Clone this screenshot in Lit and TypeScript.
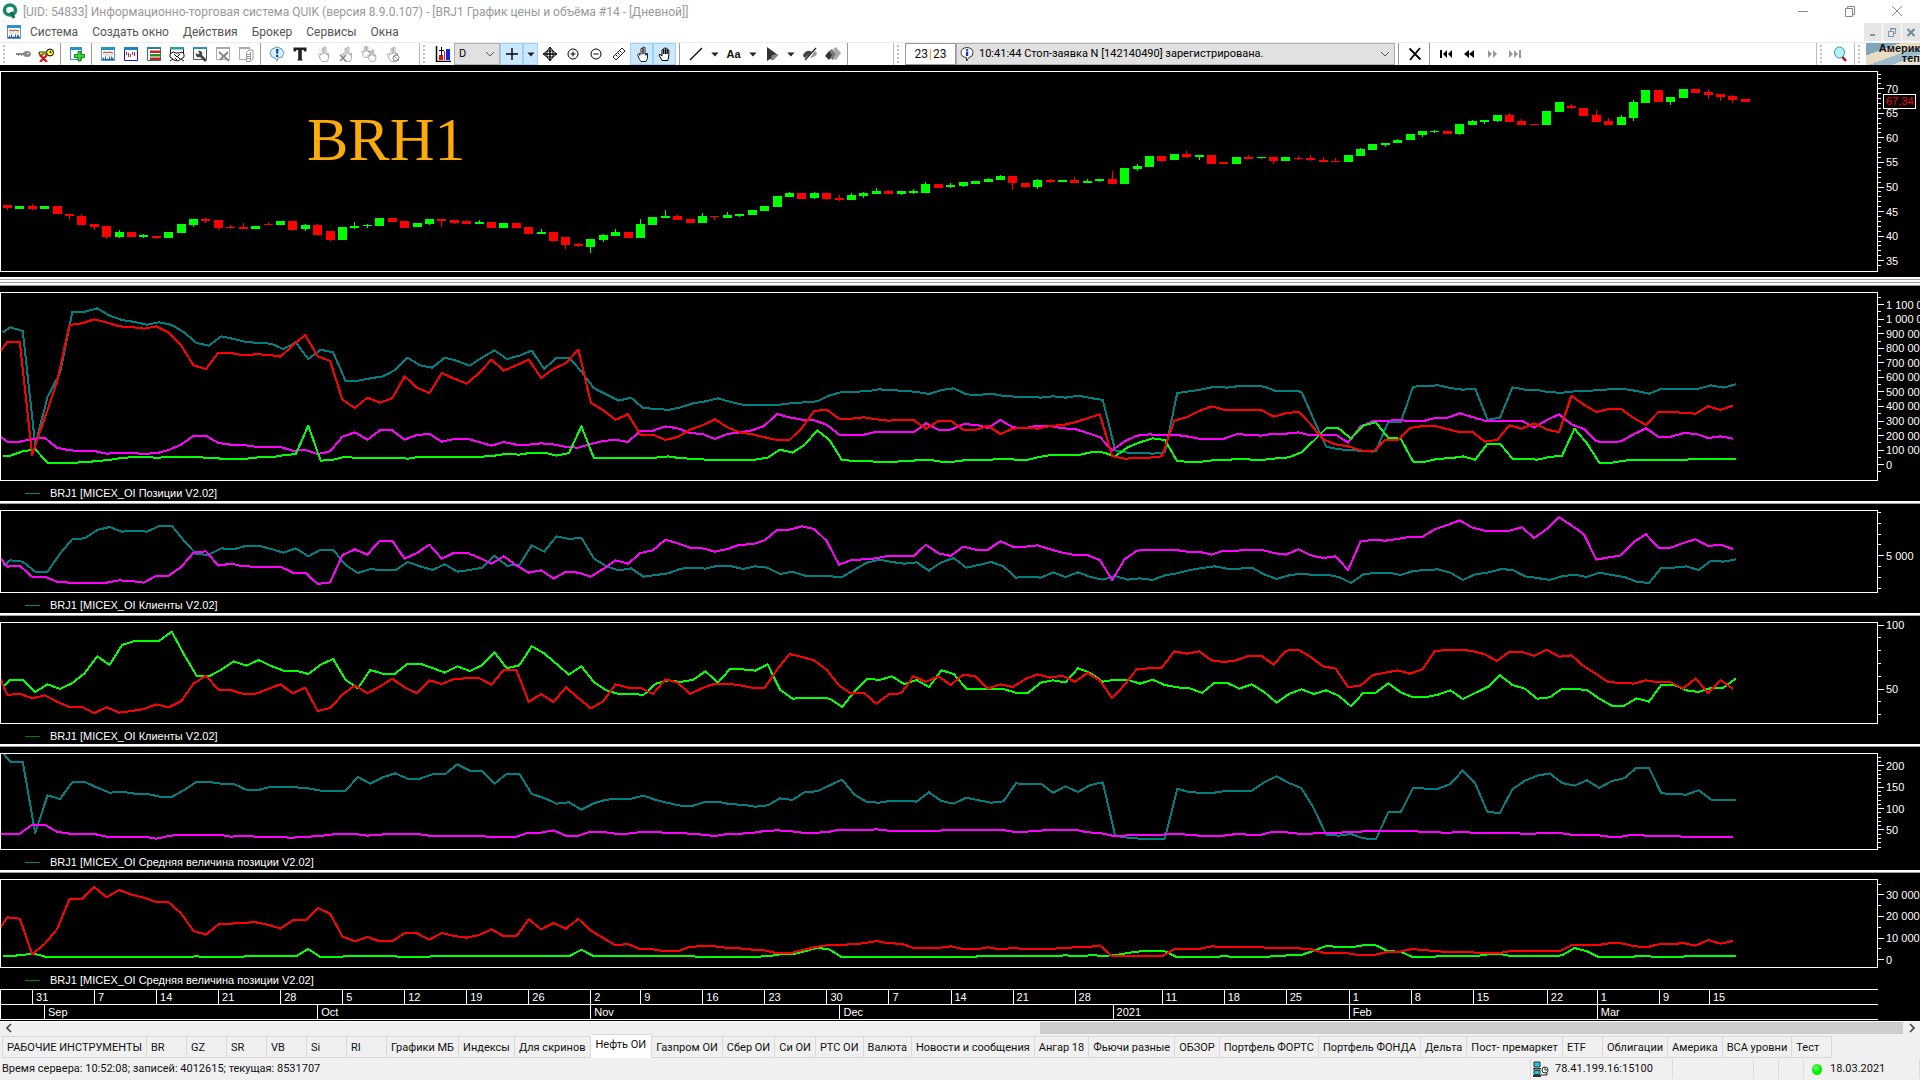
import { LitElement, html, svg, css, nothing } from "lit";
import { customElement, property } from "lit/decorators.js";

/* ---------- chart data ---------- */

const TEAL = "#008080";
const RED = "#ff0000";
const PINK = "#ff00ff";
const LIME = "#00ff00";

const PLOT_WIDTH = 1876;
const BAR_STEP = 12.414;
const FIRST_BAR = 7.35;
const UNITS = 3; // vertical data units per pixel of plot height

interface Series {
  color: string;
  shift: number;
  start: number;
  values: number[];
}
interface Tick {
  at: number;
  label?: string;
}
interface Pane {
  height: number;
  top: number;
  series: Series[];
  candles?: string[];
  ticks: Tick[];
  legend?: string;
  legendColor?: string;
  price?: { at: number; label: string };
  caption?: string;
}

/** "5 7*3 9" -> [5, 7, 7, 7, 9] */
const expand = (text: string): number[] =>
  text
    .trim()
    .split(/\s+/)
    .flatMap((t) => {
      const [v, n] = t.split("*");
      return Array(n ? Number(n) : 1).fill(Number(v));
    });

const line = (color: string, start: number, text: string): Series => ({
  color,
  shift: color === TEAL || color === LIME ? 3 : 0,
  start,
  values: expand(text),
});

const scale = (first: number, step: number, count: number, every: number, from: number, labels: string[]): Tick[] =>
  Array.from({ length: count }, (_, i) => {
    const major = i >= from && (i - from) % every === 0;
    return { at: first + step * i, label: major ? labels[(i - from) / every] : undefined };
  });

const candles = `
r,75,75,83,90 g,78,78,87,87 r,72,78,87,90 g,78,78,87,87 r,78,78,101,101 r,102,102,108,120 r,102,108,135,135 r,132,132,141,150 r,138,138,171,177 g,150,156,171,174
r,156,156,171,171 g,162,165,171,174 r,168,168,174,177 g,156,156,174,174 g,132,132,159,159 g,117,117,135,140 r,114,117,123,129 r,120,120,144,150 r,135,140,144,147 r,129,141,147,147
g,138,138,147,147 r,126,131,135,135 g,123,123,135,135 r,123,123,150,153 g,132,135,147,153 r,132,135,165,165 r,153,153,180,183 g,141,141,180,180 g,126,138,144,147 g,131,134,138,143
g,114,114,138,138 r,114,114,126,126 r,123,123,144,144 g,129,129,141,141 g,117,117,132,135 r,117,117,123,140 r,120,120,129,132 r,120,123,132,132 g,120,126,132,132 r,126,126,144,144
g,129,129,144,144 r,129,129,144,144 r,141,141,162,162 g,147,156,162,162 r,156,156,183,186 r,171,171,195,207 r,189,192,198,201 g,177,177,201,219 g,162,165,180,186 g,147,156,168,168
r,156,156,174,174 g,117,132,174,174 g,111,111,135,135 g,90,108,114,114 r,105,108,120,120 r,117,117,129,129 g,99,108,129,129 r,108,108,111,120 g,96,105,114,114 g,102,102,108,111
g,90,90,105,105 g,78,78,93,93 g,48,48,81,81 g,36,39,51,51 r,39,39,57,57 g,36,39,54,57 r,39,39,57,60 r,45,54,60,63 g,39,45,60,60 g,36,39,48,54
g,24,33,42,42 r,30,33,42,42 g,33,33,42,45 g,27,33,39,42 g,6,12,39,39 r,12,12,24,24 g,9,15,21,24 g,6,6,18,21 g,3,3,12,12 g,-6,-3,6,6
g,-15,-12,0,0 r,-12,-12,9,30 r,9,9,21,24 g,-3,0,21,27 r,-3,0,6,9 g,0,0,6,6 r,-9,0,9,9 g,-3,3,9,9 g,-3,-3,3,6 r,-27,-3,12,12
g,-36,-36,12,12 g,-48,-42,-33,-27 g,-72,-72,-39,-39 r,-72,-72,-57,-54 g,-78,-78,-60,-60 r,-87,-78,-69,-66 g,-75,-75,-69,-60 r,-75,-75,-48,-48 r,-54,-54,-48,-48 g,-69,-69,-48,-48
r,-75,-69,-63,-63 g,-69,-69,-66,-63 r,-69,-69,-57,-48 g,-69,-69,-57,-57 r,-72,-66,-63,-60 r,-75,-66,-60,-57 r,-69,-60,-54,-54 r,-66,-57,-54,-54 g,-75,-75,-54,-54 g,-96,-93,-72,-72
g,-108,-108,-90,-90 g,-111,-111,-105,-99 g,-123,-120,-111,-111 g,-138,-138,-120,-120 g,-147,-147,-135,-129 g,-150,-147,-144,-141 r,-147,-147,-138,-138 g,-168,-168,-138,-135 g,-180,-177,-165,-165 g,-180,-180,-174,-168
g,-195,-195,-177,-174 r,-201,-195,-174,-174 r,-183,-177,-165,-165 r,-168,-168,-165,-165 g,-207,-207,-165,-165 g,-234,-234,-204,-204 r,-228,-222,-216,-213 r,-216,-216,-192,-192 r,-210,-195,-174,-174 r,-186,-177,-165,-165
g,-195,-189,-165,-165 g,-240,-234,-186,-177 g,-270,-270,-231,-231 r,-270,-270,-234,-234 g,-249,-249,-234,-225 g,-273,-273,-246,-246 r,-273,-273,-261,-261 r,-273,-264,-255,-243 r,-258,-258,-249,-237 r,-255,-252,-240,-231
r,-243,-243,-234,-234`
  .trim()
  .split(/\s+/);

const panes: Pane[] = [
  {
    height: 201,
    top: -324,
    series: [],
    candles,
    ticks: scale(3, 4.914, 40, 5, 3, ["70", "65", "60", "55", "50", "45", "40", "35"]),
    price: { at: 23, label: "67,34" },
    caption: "BRH1",
  },
  {
    height: 189,
    top: 340,
    legend: "BRJ1 [MICEX_OI Позиции V2.02]",
    legendColor: "#008080",
    ticks: scale(5.4, 7.273, 25, 2, 1, [
      "1 100 000", "1 000 000", "900 000", "800 000", "700 000", "600 000",
      "500 000", "400 000", "300 000", "200 000", "100 000", "0",
    ]),
    series: [
      line(TEAL, 458, `443 454 795 652 580 396 396 386 408 421
        427 435 428 436 458 490 498 470 478 487
        490 492 508 488 538 510 518 603 603 596
        590 571 534 557 564 534 544 558 534 512
        538 528 513 568 534 534 575 625 644 663
        654 686 687 691 683 671 665 656 667 675
        675 675 675 670 668 665 647 637 636 635
        629 632 633 637 643 631 626 644 646 642
        649 651 651 654 650 654 648 655 661 812
        819 819 822 818 640 635 629 621 624 619
        618 621 635 633 636 720 801 809 811 814
        814 727 728 621 619 617 625 630 627 720
        714 623 630 631 638 639 635 633 632 628
        628 634 642 627 627 627 627 617 624 614`),
      line(PINK, 770, `786 786 778 774 804 812 814 814 822 819
        821 822 821 811 795 768 768 790 795 796
        801 801 802 813 811 823 815 771 758 780
        752 752 780 766 763 786 778 777 787 798
        787 795 795 791 794 802 804 793 784 780
        787 753 753 740 746 760 763 778 763 758
        752 738 703 713 720 722 735 765 765 765
        756 756 758 758 731 750 750 734 735 745
        721 743 745 738 739 746 748 760 772 812
        785 768 764 767 765 770 777 777 777 764
        765 768 762 762 758 767 765 765 789 740
        725 723 722 723 725 715 714 701 712 723
        723 723 723 744 721 704 734 748 785 788
        785 764 746 771 771 761 762 775 770 777`),
      line(LIME, 828, `828 815 809 849 849 849 848 844 841 834
        833 833 834 831 831 833 834 837 837 837
        833 833 827 823 738 843 840 831 836 836
        836 834 837 831 833 833 831 831 831 828
        822 825 819 819 828 820 740 834 834 834
        834 834 834 830 836 837 840 840 840 840
        840 834 810 819 795 752 782 842 843 845
        846 846 845 842 840 846 846 841 840 840
        837 840 840 831 825 827 827 818 818 830
        803 788 776 781 845 846 846 841 841 837
        840 840 836 833 818 783 746 746 777 737
        728 775 777 846 846 837 836 830 840 792
        792 837 837 840 832 828 747 791 849 849
        843 840 840 840 840 840 837 837 837 837`),
      line(RED, 517, `486 486 826 716 607 436 431 419 428 440
        442 447 440 459 497 557 568 519 520 527
        524 525 531 497 466 530 544 661 685 654
        669 656 590 624 640 580 597 612 580 540
        573 557 540 595 568 550 510 669 692 720
        704 765 765 781 772 750 737 719 743 758
        764 773 781 781 745 694 690 717 717 713
        719 723 720 721 747 724 723 750 751 738
        763 747 744 747 739 736 728 716 704 829
        837 835 834 830 723 713 694 680 690 690
        690 690 711 701 696 734 779 794 800 812
        816 780 782 745 739 739 748 758 756 786
        781 737 747 731 749 758 648 675 697 688
        688 715 736 697 696 700 702 680 691 678`),
    ],
  },
  {
    height: 83,
    top: 94,
    legend: "BRJ1 [MICEX_OI Клиенты V2.02]",
    legendColor: "#008080",
    ticks: scale(2.3, 10.87, 8, 8, 4, ["5 000"]),
    series: [
      line(TEAL, 258, `242 246 276 276 222 178 176 151 142 156
        153 156 139 138 184 224 225 206 209 198
        198 208 219 206 230 210 210 256 280 268
        272 272 247 260 271 254 276 271 264 228
        258 256 197 216 170 178 174 236 260 272
        266 291 286 281 267 264 267 258 259 268
        260 264 283 276 288 289 290 292 270 249
        240 247 252 248 273 248 235 264 256 247
        260 294 291 294 278 292 278 292 300 289
        300 296 301 287 281 271 265 260 267 267
        264 284 298 287 282 286 285 292 310 284
        279 279 286 274 271 269 279 301 284 279
        269 270 290 295 301 290 285 292 279 286
        292 306 310 264 264 260 271 243 246 239`),
      line(PINK, 234, `261 258 291 291 306 309 309 309 309 302
        304 309 288 288 262 219 215 258 252 260
        261 261 261 279 279 313 308 226 209 225
        183 183 237 220 195 237 219 219 234 252
        230 257 279 272 297 276 279 291 268 242
        252 220 212 180 191 204 206 216 208 195
        194 182 151 150 140 148 184 255 241 239
        236 228 230 230 195 221 229 201 210 210
        185 201 201 197 209 219 226 226 241 301
        239 213 210 210 210 216 216 225 213 213
        211 210 220 225 209 227 235 230 271 186
        180 183 178 171 171 149 136 122 144 153
        153 153 143 175 148 113 137 164 240 233
        227 187 164 204 204 190 179 199 195 208`),
    ],
  },
  {
    height: 102,
    top: 430,
    legend: "BRJ1 [MICEX_OI Клиенты V2.02]",
    legendColor: "#008000",
    ticks: scale(3, 12.8, 8, 5, 0, ["100", "50"]),
    series: [
      line(LIME, 622, `600 600 637 614 628 610 580 530 556 496
        484 483 483 456 525 588 590 570 545 558
        541 559 573 573 583 555 538 600 626 571
        582 582 552 552 565 579 560 574 557 518
        566 557 500 521 553 585 560 607 632 643
        642 646 612 602 607 600 575 609 567 569
        573 554 630 657 655 654 657 682 636 597
        601 590 613 601 622 572 583 627 627 627
        628 639 639 609 602 608 566 580 606 600
        600 612 600 616 623 626 640 609 609 627
        614 637 669 643 629 643 632 648 680 639
        639 611 638 653 653 645 632 658 640 622
        587 616 627 657 653 627 628 631 657 678
        678 656 666 615 615 632 637 625 624 596`),
      line(RED, 595, `646 642 656 647 666 682 682 700 683 699
        694 688 674 683 665 612 588 630 631 643
        642 628 614 641 624 694 685 645 617 641
        621 597 623 641 602 613 598 596 595 615
        570 570 667 643 667 623 655 686 665 614
        624 624 643 599 609 643 625 612 612 617
        624 625 570 523 532 542 570 618 642 639
        672 644 641 590 607 590 616 585 590 627
        614 622 598 584 594 588 606 580 602 656
        615 568 566 564 515 522 515 542 547 542
        528 528 555 513 510 532 560 567 622 618
        586 579 572 582 569 513 512 510 514 524
        544 516 516 529 510 531 527 560 583 608
        609 612 602 608 608 627 596 640 601 628`),
    ],
  },
  {
    height: 97,
    top: 73,
    legend: "BRJ1 [MICEX_OI Средняя величина позиции V2.02]",
    legendColor: "#008080",
    ticks: scale(4.2, 4.28, 22, 5, 2, ["200", "150", "100", "50"]),
    series: [
      line(TEAL, 70, `96 96 310 197 208 157 157 174 189 186
        192 192 201 202 181 157 157 162 163 180
        181 171 171 173 176 183 183 183 142 162
        143 131 147 147 134 134 104 123 124 162
        132 132 193 205 222 218 240 221 210 208
        207 198 211 220 228 228 216 216 224 225
        231 227 206 211 187 185 167 150 195 217
        219 213 213 216 188 214 222 204 212 219
        215 161 164 162 189 170 187 166 158 318
        324 327 327 327 177 188 189 189 183 183
        183 158 140 160 175 236 315 318 313 326
        329 248 248 174 177 177 163 122 161 248
        249 179 153 138 131 160 168 152 175 154
        146 114 114 191 193 195 182 210 210 210`),
      line(PINK, 312, `312 312 285 285 306 312 312 313 321 321
        321 321 327 319 315 315 315 315 321 318
        321 321 323 324 321 320 315 312 313 318
        315 312 312 313 318 318 318 318 320 321
        321 321 309 309 302 318 318 306 307 312
        312 307 307 309 310 312 315 319 313 312
        310 304 302 304 309 309 308 300 301 302
        299 303 303 303 303 303 301 300 300 300
        300 306 306 304 300 300 300 308 310 318
        318 315 315 315 312 315 318 318 318 313
        315 315 306 308 312 312 309 309 308 306
        303 303 303 303 307 307 310 306 309 309
        309 309 312 312 309 310 315 315 316 321
        321 315 318 318 318 321 321 321 321 321`),
    ],
  },
  {
    height: 89,
    top: 452,
    legend: "BRJ1 [MICEX_OI Средняя величина позиции V2.02]",
    legendColor: "#008000",
    ticks: scale(5, 10.83, 8, 2, 1, ["30 000", "20 000", "10 000", "0"]),
    series: [
      line(LIME, 681, `681 676 674 684*12 681 684*3 681
        681*4 659 684*2 681*5 684*2 681*12
        661 681*9 684*4 682 681 675 675 666 655 661 684*3
        684*8 681*6
        681 678 681 678 679 678
        671 666 666 666 684 684 684 682 681 684
        684 683 680 678 677 664 650 653 654 648
        648 666 667 684 684 681 681 681 681 675
        674 681 681 681 681 678 656 666 684 684
        684 681 681 684 684 681*5`),
      line(RED, 597, `564 568 675 644 600 510 510 473 504 482
        496 505 518 519 552 605 616 585 583 580
        579 586 598 573 573 536 553 622 636 623
        636 636 611 612 631 611 620 625 617 600
        621 621 570 600 581 598 569 604 626 648
        644 660 660 666 666 652 651 651 656 657
        661 663 672 672 663 654 648 648 644 642
        635 642 643 656 657 656 651 659 660 654
        660 656 659 660 659 656 654 654 648 681
        681 681 681 681 660 660 659 651 653 653
        653 654 656 657 657 660 670 672 672 678
        678 669 669 660 661 666 667 668 669 672
        672 666 666 666 666 666 648 648 648 642
        642 650 654 645 645 641 649 632 643 635`),
    ],
  },
];

const weeks: [number, string][] = [
  [2, "31"], [7, "7"], [12, "14"], [17, "21"], [22, "28"], [27, "5"], [32, "12"], [37, "19"], [42, "26"],
  [47, "2"], [51, "9"], [56, "16"], [61, "23"], [66, "30"], [71, "7"], [76, "14"], [81, "21"], [86, "28"],
  [93, "11"], [98, "18"], [103, "25"], [108, "1"], [113, "8"], [118, "15"], [124, "22"], [128, "1"],
  [133, "9"], [137, "15"],
];
const months: [number, string][] = [
  [3, "Sep"], [25, "Oct"], [47, "Nov"], [67, "Dec"], [89, "2021"], [108, "Feb"], [128, "Mar"],
];

/* ---------- one chart pane ---------- */

@customElement("chart-pane")
export class ChartPane extends LitElement {
  @property({ attribute: false }) pane!: Pane;

  static styles = css`
    :host {
      display: flex;
      flex-direction: column;
      min-height: 0;
      padding-top: 6px;
      box-sizing: border-box;
      background: #000;
      color: #fff;
      font: 11px/14px "Liberation Sans", Arial, sans-serif;
    }
    .row {
      flex: 1;
      min-height: 0;
      display: grid;
      grid-template-columns: 1fr 42px;
    }
    .box {
      position: relative;
      min-width: 0;
      min-height: 0;
      border: 1px solid #fff;
    }
    .plot {
      display: block;
      width: 100%;
      height: 100%;
      position: absolute;
      inset: 0;
    }
    .axis {
      display: block;
      width: 42px;
      height: 100%;
      min-height: 0;
      overflow: visible;
    }
    .tick {
      stroke: #fff;
      shape-rendering: crispEdges;
    }
    .num {
      fill: #fff;
    }
    .tag {
      fill: #000;
      stroke: #fff;
      shape-rendering: crispEdges;
    }
    .tagnum {
      fill: #f00;
    }
    .caption {
      position: absolute;
      left: 306px;
      top: 32px;
      font: 62px/70px "Liberation Serif", "Times New Roman", serif;
      color: #fbac0a;
    }
    .legend {
      height: 20px;
      display: flex;
      align-items: center;
      gap: 10px;
      padding-left: 25px;
      padding-top: 4px;
      box-sizing: border-box;
    }
    .swatch {
      width: 15px;
      height: 1px;
    }
    .foot {
      height: 5px;
    }
  `;

  private drawSeries(s: Series) {
    const pts = s.values.map((v, i) => `${FIRST_BAR + s.shift + BAR_STEP * i},${v}`);
    return svg`<polyline points="${s.shift ? 3 : 0},${s.start} ${pts.join(" ")}" fill="none" stroke=${s.color}
      stroke-width="2" stroke-linejoin="round" vector-effect="non-scaling-stroke" shape-rendering="crispEdges"></polyline>`;
  }

  private drawCandle(text: string, i: number) {
    const [kind, ...n] = text.split(",");
    const [high, top, bottom, low] = n.map(Number);
    const x = Math.round(FIRST_BAR + BAR_STEP * i - 0.5);
    const fill = kind === "g" ? LIME : RED;
    return svg`<rect x=${x} y=${high} width="1" height=${low - high} fill=${fill}></rect>
      <rect x=${x - 4} y=${top} width="9" height=${Math.max(bottom - top, 3)} fill=${fill}></rect>`;
  }

  render() {
    const p = this.pane;
    const pct = (v: number) => `${(v / p.height) * 100}%`;
    return html`
      <div class="row">
        <div class="box">
          <svg
            class="plot"
            viewBox="1 ${p.top} ${PLOT_WIDTH} ${(p.height - 2) * UNITS}"
            preserveAspectRatio="none"
            shape-rendering="crispEdges"
          >
            ${p.candles?.map((c, i) => this.drawCandle(c, i))} ${p.series.map((s) => this.drawSeries(s))}
          </svg>
          ${p.caption ? html`<div class="caption">${p.caption}</div>` : nothing}
        </div>
        <svg class="axis">
          ${p.ticks.map(
            (t) => svg`<line class="tick" x1="0" x2=${t.label ? 6 : 3} y1=${pct(t.at)} y2=${pct(t.at)}></line>
              ${t.label ? svg`<text class="num" x="8" y=${pct(t.at)} dy="4">${t.label}</text>` : nothing}`,
          )}
          ${p.price
            ? svg`<svg y=${pct(p.price.at)} overflow="visible">
                <rect class="tag" x="5" y="0" width="32" height="14"></rect>
                <text class="tagnum" x="8" y="11">${p.price.label}</text></svg>`
            : nothing}
        </svg>
      </div>
      ${p.legend
        ? html`<div class="legend">
            <span class="swatch" style="background:${p.legendColor}"></span><span>${p.legend}</span>
          </div>`
        : html`<div class="foot"></div>`}
    `;
  }
}

/* ---------- icons ---------- */

const hand = (c: string) => svg`<path d="M5.500 9.500V7.500l-1 0-1 1 2 5 1.500 2h5l1.500-3V7.500h-1.500v2M7 9V2.500q1-1 2 0V8M9 8V1.500q1-1 2 0V8M11 8q1.500-1 1.500 1" fill="#fff" stroke=${c}/>`;
const sheet = (c: string) => svg`<path d="M1.500 1.500h13v13h-13z" fill="#fff" stroke="#5a9ab8"/><path d="M1 1h14v3H1z" fill=${c}/>`;

const icons = {
  keyGrey: svg`<path d="M1 7h8v2H7v1H6V9H4v1H3V9H1z" fill="#8a8a8a"/><ellipse cx="12" cy="8" rx="4" ry="3" fill="#8a8a8a"/><path d="M12 7h2v1h-2z" fill="#fff"/>`,
  keyOff: svg`<path d="M1 6h8v2H4v2H2V8H1z" fill="#ff0" stroke="#000" stroke-width=".8"/><circle cx="12" cy="6.500" r="3.500" fill="#ff0" stroke="#000"/><circle cx="12.500" cy="6" r="1" fill="#000"/><path d="M2 9l7 7M9 9l-7 7" stroke="#d8121c" stroke-width="2.200"/>`,
  add: svg`<path d="M1.500 1.500h11v12h-11z" fill="#fff" stroke="#3a92b0"/><path d="M1 1h12v3H1z" fill="#2793c8"/><path d="M9 5.500h3v3h3.500v3H12V15H9v-3.500H5.500v-3H9z" fill="#3fd33f" stroke="#11861b"/>`,
  chart: svg`${sheet("#2793c8")}<path d="M3 7l2-1 2 1 2-1 4 1" fill="none" stroke="#c22"/><path d="M3.500 13.500v-2M5.500 13.500v-3M7.500 13.500v-1M9.500 13.500v-3M11.500 13.500v-3M12.500 13.500v-2M2 13.500h12" stroke="#2457d0"/><path d="M3 9h10" stroke="#ccc"/>`,
  chartBlue: svg`<path d="M1.500 1.500h13v13h-13z" fill="#fff" stroke="#1010e0"/><path d="M1 1h14v3H1z" fill="#1f86c4"/><path d="M3.500 6v3M5.500 7v4M9.500 6v3M11.500 6v4" stroke="#c22"/><path d="M7.500 8v3" stroke="#2457d0"/>`,
  list: svg`<path d="M1.500 1.500h13v13h-13z" fill="#fff" stroke="#2a7090"/><path d="M1 1h14v2H1z" fill="#2a7fa8"/><path d="M4 4.500h11v2.500H4z" fill="#c8201c"/><path d="M4 8h11v2.500H4z" fill="#1d9427"/><path d="M4 11.500h11v2.500H4z" fill="#c8201c"/>`,
  deal: svg`<path d="M1.500 12V1.500h13V9" fill="#fff" stroke="#222"/><path d="M1 1h14v2.500H1z" fill="#2a9fa8"/><path d="M1 8l3-2 3 1h3l3-1 2 2v3l-3 2-3 2-4-1-4-3z" fill="#fff" stroke="#111"/><path d="M5 8l3 3 3-3M6 12l2 2M9 11l2 2M1 15l3-2M12 13l3 2" stroke="#111" fill="none"/>`,
  wrench: svg`<path d="M1.500 1.500h13v12h-13z" fill="#fff" stroke="#555"/><path d="M1 1h14v2H1z" fill="#2a8fc8"/><path d="M6 5a3 3 0 0 1 4 4l5 5-2 2-5-5a3 3 0 0 1-4-4l2 1.500L7.500 7z" fill="#444"/>`,
  wrenchOff: svg`<path d="M1.500 1.500h13v12h-13z" fill="#fff" stroke="#aaa"/><path d="M1 1h14v2H1z" fill="#aaa"/><path d="M4 6l10 9M13 6l-8 8" stroke="#888" stroke-width="2"/>`,
  copyOff: svg`<path d="M1.500 1.500h10v12h-10z" fill="#fff" stroke="#aaa"/><path d="M1 1h11v2H1z" fill="#aaa"/><path d="M8.500 6.500l2.500-2.500h4v9l-3 2.500H8.500z" fill="#fff" stroke="#999"/><path d="M9 8.500h3M9 10.500h3M9 12.500h3M12.500 6v8" stroke="#999"/>`,
  alert: svg`<path d="M8 1l5 2 2 4-2 4-4 1-1 3-2-3-3-1-2-4 2-4z" fill="#d8efff" stroke="#5a9ab8"/><path d="M7 3h2.500L9 8H7.500z" fill="#0a3cae"/><path d="M7 9h2.200v2H7z" fill="#0a3cae"/>`,
  text: svg`<path d="M1.500 1.500h13v4h-2l-1-1.500H9.800V13l1.200 1.500H5L6.200 13V4H4.500l-1 1.500h-2z" fill="#222"/>`,
  handOff: hand("#aaa"),
  handX: svg`${hand("#aaa")}<path d="M2 9l6 6M8 9l-6 6" stroke="#888" stroke-width="1.600"/>`,
  hands: svg`<g transform="translate(-2 -1) scale(.8)">${hand("#999")}</g><g transform="translate(4 3) scale(.8)">${hand("#999")}</g>`,
  handStop: svg`${hand("#aaa")}<circle cx="12" cy="12" r="3" fill="#fff" stroke="#888"/><path d="M10 10l4 4" stroke="#888"/>`,
  priceChart: svg`<path d="M1.500 0v15.500H16" stroke="#000" fill="none" stroke-width="1.500"/><path d="M4 9h4v5H4z" fill="#e01010"/><path d="M11 3h4v11h-4z" fill="#1020f0"/><path d="M6.500 1v9M4 4.500h5" stroke="#000"/><path d="M9.500 5v9" stroke="#f01010"/>`,
  cross: svg`<path d="M8 2v12M2 8h12" stroke="#000" stroke-width="1.400"/>`,
  move: svg`<path d="M8 2v12M2 8h12" stroke="#000" stroke-width="1.400"/><path d="M5 5L8 1l3 4zM5 11l3 4 3-4zM5 5L1 8l4 3zM11 5l4 3-4 3z" fill="none" stroke="#000"/>`,
  zoomIn: svg`<circle cx="8" cy="8" r="5" fill="none" stroke="#000"/><path d="M8 5.500v5M5.500 8h5" stroke="#000"/>`,
  zoomOut: svg`<circle cx="8" cy="8" r="5" fill="none" stroke="#000"/><path d="M5.500 8h5" stroke="#000"/>`,
  ruler: svg`<path d="M2 11L11 2l3 3-9 9z" fill="#fff" stroke="#222"/><path d="M5 9l1.500 1.500M7 7l1.500 1.500M9 5l1.500 1.500" stroke="#222"/>`,
  hand: hand("#222"),
  palm: svg`<path d="M5 14.500L2 9q.5-1.500 2 0l1 1V4q.8-1 1.700 0v4V2.500q.8-1 1.700 0V8 2.500q.8-1 1.700 0V8 4q.8-1 1.700 0v6q0 2-1 4.500z" fill="#fff" stroke="#000"/>`,
  slash: svg`<path d="M2 14L14 2" stroke="#000" stroke-width="1.200"/>`,
  cursor: svg`<path d="M3 1v14l3-2 3 1 5-5z" fill="#333"/><path d="M8 9l6-1-4 6-3-1z" fill="#888"/>`,
  hide: svg`<path d="M1 9q3-5 7-4l2 1-7 6q-2-1-2-3z" fill="#444"/><path d="M8 12q5-1 7-4 0-2-2-3z" fill="#999"/><path d="M3 14L14 2" stroke="#222" stroke-width="1.300"/>`,
  clear: svg`<path d="M0 10l4-5 4 4-4 5z" fill="#333"/><path d="M4 5l3-2 5 6-4 5-3-2 2-3z" fill="#777"/><path d="M8 3l3-2 5 6-5 7-3-2 3-4z" fill="#aaa"/>`,
  info: svg`<path d="M8 1.500q6 .5 6 5t-4 5L7.500 15v-3.500Q2 11 2 6.500t6-5z" fill="#fff" stroke="#333"/><path d="M7 3h2.200v1.800H7zM7 5.500h2.200V10H7z" fill="#1030e0"/>`,
  cancel: svg`<path d="M2.500 2.500l11 11M13 2L3 14" stroke="#000" stroke-width="1.800"/>`,
  first: svg`<path d="M2 4h2v8H2zM9 4v8L5 8zM14 4v8l-4-4z" fill="#000"/>`,
  back: svg`<path d="M8 4v8L3 8zM13 4v8L8 8z" fill="#000"/>`,
  next: svg`<path d="M4 4v8l4-4zM9 4v8l4-4z" fill="#999"/>`,
  last: svg`<path d="M2 4v8l4-4zM7 4v8l4-4zM12 4h2v8h-2z" fill="#999"/>`,
  find: svg`<ellipse cx="7.500" cy="6.500" rx="5" ry="5.500" fill="#b8f0fa" stroke="#2a8fb0"/><path d="M10.500 11l3.500 4" stroke="#c01010" stroke-width="2.600"/>`,
  link: svg`<path d="M1 1h6v5H1z" fill="#1cc8d8" stroke="#333"/><path d="M0 7h8v1.500H0z" fill="#333"/><path d="M1 9.500h6v4H1z" fill="#1cc8d8" stroke="#333"/><path d="M0 14h8v2H0z" fill="#333"/><circle cx="12" cy="9" r="3" fill="#fff" stroke="#222"/><path d="M12 7v2h2M8 14h6v-2" fill="none" stroke="#222"/>`,
  down: svg`<path d="M4 6h9l-4.500 5z" fill="#222"/>`,
};
type IconName = keyof typeof icons;
const icon = (name: IconName) => html`<svg class="icon" viewBox="0 0 16 16" aria-hidden="true">${icons[name]}</svg>`;

const tool = (name: IconName, label: string, on = false) =>
  html`<button class="tool ${on ? "on" : ""}" title=${label} aria-label=${label}>${icon(name)}</button>`;
const drop = (label: string, on = false) =>
  html`<button class="tool narrow ${on ? "on" : ""}" title=${label} aria-label=${label}>${icon("down")}</button>`;
const sep = html`<span class="sep"></span>`;
const grip = html`<span class="grip"></span>`;
const chevron = html`<svg class="chevron" viewBox="0 0 10 6" aria-hidden="true"><path d="M1 1l4 4 4-4" fill="none" stroke="#555"/></svg>`;

const tabs = [
  "РАБОЧИЕ ИНСТРУМЕНТЫ", "BR", "GZ", "SR", "VB", "Si", "RI", "Графики МБ", "Индексы", "Для скринов", "Нефть ОИ",
  "Газпром ОИ", "Сбер ОИ", "Си ОИ", "РТС ОИ", "Валюта", "Новости и сообщения", "Ангар 18", "Фьючи разные", "ОБЗОР",
  "Портфель ФОРТС", "Портфель ФОНДА", "Дельта", "Пост- премаркет", "ETF", "Облигации", "Америка", "ВСА уровни", "Тест",
];

/* ---------- application window ---------- */

@customElement("app-root")
export class AppRoot extends LitElement {
  static styles = css`
    :host {
      display: flex;
      flex-direction: column;
      height: 100vh;
      overflow: hidden;
      background: #f0f0f0;
      color: #111;
      font: 12px/16px Roboto, "Liberation Sans", sans-serif;
    }
    button {
      border: 0;
      padding: 0;
      margin: 0;
      background: none;
      font: inherit;
      color: inherit;
    }
    .icon {
      width: 16px;
      height: 16px;
      display: block;
      flex: none;
    }
    .title {
      height: 22px;
      flex: none;
      display: flex;
      align-items: center;
      gap: 5px;
      padding-left: 2px;
      background: #fff;
      color: #999;
    }
    .title h1 {
      flex: 1;
      margin: 0;
      padding-top: 2px;
      font: inherit;
      white-space: nowrap;
    }
    .win {
      width: 46px;
      height: 22px;
      display: grid;
      place-items: center;
    }
    .win svg {
      width: 12px;
      height: 12px;
    }
    .menu {
      height: 20px;
      flex: none;
      display: flex;
      align-items: center;
      gap: 14px;
      padding-left: 6px;
      background: #fff;
      color: #555;
    }
    .menu .fill {
      flex: 1;
    }
    .menu .icon {
      margin-right: -6px;
    }
    .mdis {
      display: flex;
      gap: 1px;
    }
    .mdi {
      width: 18px;
      height: 18px;
      background: #e6e6e6;
      display: grid;
      place-items: center;
    }
    .mdi svg {
      width: 10px;
      height: 10px;
    }
    .bars {
      height: 23px;
      flex: none;
      display: grid;
      grid-template-columns: 420px 474px 1fr 38px 65px;
      background: #fff;
      border-top: 1px solid #ececec;
      box-sizing: border-box;
      font-size: 11px;
    }
    .bar {
      display: flex;
      align-items: stretch;
      min-width: 0;
      overflow: hidden;
      border-right: 1px solid #bbb;
    }
    .bar:last-child {
      border: 0;
    }
    .grip {
      width: 3px;
      flex: none;
      margin: 2px 3px;
      border-left: 2px dotted #c0c0c0;
    }
    .sep {
      width: 1px;
      flex: none;
      margin: 0 4px 0 3px;
      background: #9a9a9a;
    }
    .tool {
      width: 23px;
      flex: none;
      display: grid;
      place-items: center;
    }
    .narrow {
      width: 15px;
    }
    .narrow .icon {
      width: 13px;
    }
    .on {
      background: #cce8ff;
      box-shadow: inset 0 0 0 1px #99d1ff;
    }
    .combo {
      display: flex;
      align-items: center;
      position: relative;
      background: #e1e1e1;
      border: 1px solid #adadad;
      box-sizing: border-box;
      flex: 0 0 46px;
    }
    .combo.wide {
      flex: 0 1 439px;
      padding-left: 2px;
    }
    .combo select {
      appearance: none;
      flex: 1;
      min-width: 0;
      height: 100%;
      border: 0;
      background: none;
      font: inherit;
      color: #000;
      padding: 0 0 0 4px;
    }
    .chevron {
      width: 10px;
      height: 6px;
      position: absolute;
      right: 4px;
      pointer-events: none;
    }
    .count {
      width: 51px;
      flex: none;
      box-sizing: border-box;
      border: 1px solid #999;
      display: grid;
      place-items: center;
      font-size: 12px;
    }
    .count i {
      color: #e08a1e;
      font-style: normal;
      padding: 0 1px;
    }
    .font {
      font: 700 11px/16px "Liberation Sans", Arial, sans-serif;
    }
    .banner {
      flex: 1;
      min-width: 0;
      overflow: hidden;
      display: flex;
      flex-direction: column;
      align-items: flex-end;
      background: linear-gradient(160deg, #7fa6bd 0 30%, #e8dcc4 30% 55%, #9dbccb 55% 75%, #e9e2d2 75%);
      color: #111;
      font: 700 11px/10px "Liberation Sans", Arial, sans-serif;
      text-decoration: none;
      white-space: nowrap;
    }
    .charts {
      flex: 1;
      min-height: 0;
      display: flex;
      flex-direction: column;
      background: #000;
      border-bottom: 1px solid #fff;
    }
    .split {
      flex: none;
      height: 3px;
      background: linear-gradient(#fff 0 2px, #a0a0a0 2px);
    }
    .split.triple {
      height: 9px;
      background: repeating-linear-gradient(#fff 0 2px, #a0a0a0 2px 3px);
    }
    .dates {
      flex: none;
      margin: 1px 42px 1px 0;
      border: 1px solid #fff;
      border-width: 1px 0 0 1px;
      color: #fff;
      font: 11px/14px "Liberation Sans", Arial, sans-serif;
    }
    .line {
      display: grid;
      height: 14px;
      border-bottom: 1px solid #fff;
    }
    .cell {
      min-width: 0;
      box-sizing: border-box;
      white-space: nowrap;
      border-left: 1px solid #fff;
      padding-left: 3px;
    }
    .scroll {
      flex: none;
      height: 12px;
      display: grid;
      grid-template-columns: 17px 1023fr 863fr 17px;
    }
    .scroll button {
      display: grid;
      place-items: center;
    }
    .scroll svg {
      width: 6px;
      height: 10px;
    }
    .thumb {
      background: #cdcdcd;
    }
    .tabs {
      flex: none;
      height: 24px;
      display: flex;
      align-items: flex-end;
      padding-left: 2px;
      font-size: 11px;
    }
    .tab {
      flex: none;
      height: 22px;
      min-width: 40px;
      box-sizing: border-box;
      padding: 2px 4px 0;
      text-align: left;
      white-space: nowrap;
      border: 1px solid #d9d9d9;
      border-left: 0;
    }
    .tab:first-child {
      border-left: 1px solid #d9d9d9;
    }
    .tab.active {
      height: 24px;
      background: #fff;
      border-bottom-color: #fff;
      padding: 0 5px 2px;
    }
    .status {
      flex: none;
      height: 22px;
      display: grid;
      grid-template-columns: 1fr 142px 81px 25px 25px 116px;
      align-items: center;
      font-size: 11px;
      white-space: nowrap;
    }
    .status > * {
      height: 20px;
      display: flex;
      align-items: center;
      gap: 6px;
      padding-left: 2px;
      border-right: 1px solid #dcdcdc;
    }
    .dot {
      width: 10px;
      height: 11px;
      margin: 0 2px 0 6px;
      border-radius: 50%;
      background: radial-gradient(circle at 40% 35%, #7dff7d, #00f000 45%);
    }
  `;

  private dateRow(items: [number, string][]) {
    const x = (k: number) => Math.round(FIRST_BAR + BAR_STEP * k - 0.5);
    const edges = [1, ...items.map(([k]) => x(k)), PLOT_WIDTH + 1];
    const columns = edges.slice(1).map((e, i) => `minmax(0,${e - edges[i]}fr)`);
    return html`<div class="line" style="grid-template-columns:${columns.join(" ")}">
      <span></span>${items.map(([, label]) => html`<span class="cell">${label}</span>`)}
    </div>`;
  }

  render() {
    return html`
      <header class="title">
        <svg class="icon" viewBox="0 0 16 16" aria-hidden="true">
          <ellipse cx="8" cy="7" rx="5.500" ry="5" fill="none" stroke="#128a68" stroke-width="3.600"></ellipse>
          <path d="M9 9l3 6" stroke="#0b6b50" stroke-width="3"></path>
        </svg>
        <h1>[UID: 54833] Информационно-торговая система QUIK (версия 8.9.0.107) - [BRJ1 График цены и объёма #14 - [Дневной]]</h1>
        <div class="mdis">
          <button class="win" aria-label="Свернуть"><svg viewBox="0 0 12 12"><path d="M1 6.500h10" stroke="#888"></path></svg></button>
          <button class="win" aria-label="Восстановить">
            <svg viewBox="0 0 12 12"><path d="M1.500 3.500h7v8h-7zM3.500 3.500v-2h7v8h-2" fill="none" stroke="#888"></path></svg>
          </button>
          <button class="win" aria-label="Закрыть"><svg viewBox="0 0 12 12"><path d="M1 1l10 10M11 1L1 11" stroke="#888"></path></svg></button>
        </div>
      </header>
      <nav class="menu">
        <svg class="icon" viewBox="0 0 16 16" aria-hidden="true">${icons.chart}</svg>
        <button>Система</button><button>Создать окно</button><button>Действия</button><button>Брокер</button>
        <button>Сервисы</button><button>Окна</button><span class="fill"></span>
        <div class="mdis">
          <button class="mdi" aria-label="Свернуть окно"><svg viewBox="0 0 10 10"><path d="M2 7h5v2H2z" fill="#8095a8"></path></svg></button>
          <button class="mdi" aria-label="Восстановить окно">
            <svg viewBox="0 0 10 10"><path d="M1.500 4.500h5v5h-5zM3.500 4.500v-3h5v5h-2M3 2h6" fill="none" stroke="#8095a8"></path></svg>
          </button>
          <button class="mdi" aria-label="Закрыть окно"><svg viewBox="0 0 10 10"><path d="M1.500 2l7 7M8.500 2l-7 7" stroke="#71869a" stroke-width="2"></path></svg></button>
        </div>
      </nav>
      <div class="bars">
        <div class="bar">
          ${grip}${tool("keyGrey", "Установить соединение")}${tool("keyOff", "Разорвать соединение")}${sep}
          ${tool("add", "Создать окно")}${sep}${tool("chart", "График")}${tool("chartBlue", "Таблица")}
          ${tool("list", "Котировки")}${tool("deal", "Сделки")}${tool("wrench", "Настройка")}
          ${tool("wrenchOff", "Удалить")}${tool("copyOff", "Копировать")}${sep}${tool("alert", "Сообщения")}
          ${tool("text", "Текст")}${tool("handOff", "Заявка")}${tool("handX", "Снять заявку")}
          ${tool("hands", "Заявки")}${tool("handStop", "Снять все")}
        </div>
        <div class="bar">
          ${grip}${tool("priceChart", "График цены")}
          <div class="combo">
            <select aria-label="Интервал"><option>D</option></select>${chevron}
          </div>
          ${tool("cross", "Перекрестие", true)}${drop("Вид курсора", true)}${tool("move", "Переместить")}
          ${tool("zoomIn", "Увеличить")}${tool("zoomOut", "Уменьшить")}${tool("ruler", "Линейка")}
          ${tool("hand", "Выбор", true)}${tool("palm", "Прокрутка", true)}${sep}${tool("slash", "Линия")}${drop("Линии")}
          <button class="tool font">Aa</button>${drop("Подписи")}${tool("cursor", "Фигура")}${drop("Фигуры")}
          ${tool("hide", "Скрыть")}${tool("clear", "Очистить")}${sep}
        </div>
        <div class="bar">
          ${grip}
          <span class="count"><span>23<i>|</i>23</span></span>
          <div class="combo wide">
            ${icon("info")}
            <select aria-label="Сообщение">
              <option>10:41:44 Стоп-заявка N [142140490] зарегистрирована.</option></select
            >${chevron}
          </div>
          ${sep}${tool("cancel", "Удалить сообщение")}${sep}${tool("first", "В начало")}${tool("back", "Назад")}
          ${tool("next", "Вперёд")}${tool("last", "В конец")}
        </div>
        <div class="bar">${grip}${tool("find", "Поиск")}</div>
        <div class="bar">${grip}<a class="banner" href="#"><span>Америк</span><span>теп</span></a></div>
      </div>
      <main class="charts">
        ${panes.map(
          (p, i) => html`
            ${i ? html`<div class="split ${i === 1 ? "triple" : ""}"></div>` : nothing}
            <chart-pane .pane=${p} style="flex:${p.height} 1 ${p.legend ? 26 : 11}px"></chart-pane>
          `,
        )}
        <div class="dates">${this.dateRow(weeks)}${this.dateRow(months)}</div>
      </main>
      <div class="scroll">
        <button aria-label="Влево"><svg viewBox="0 0 6 10"><path d="M5 1L1 5l4 4" fill="none" stroke="#444" stroke-width="1.600"></path></svg></button>
        <span></span><span class="thumb"></span>
        <button aria-label="Вправо"><svg viewBox="0 0 6 10"><path d="M1 1l4 4-4 4" fill="none" stroke="#444" stroke-width="1.600"></path></svg></button>
      </div>
      <nav class="tabs" role="tablist">
        ${tabs.map((t) => {
          const on = t === "Нефть ОИ";
          return html`<button class="tab ${on ? "active" : ""}" role="tab" aria-selected=${on}>${t}</button>`;
        })}
      </nav>
      <footer class="status">
        <span>Время сервера: 10:52:08; записей: 4012615; текущая: 8531707</span>
        <span>${icon("link")}78.41.199.16:15100</span>
        <span></span><span></span><span></span>
        <span><i class="dot"></i>18.03.2021</span>
      </footer>
    `;
  }
}
